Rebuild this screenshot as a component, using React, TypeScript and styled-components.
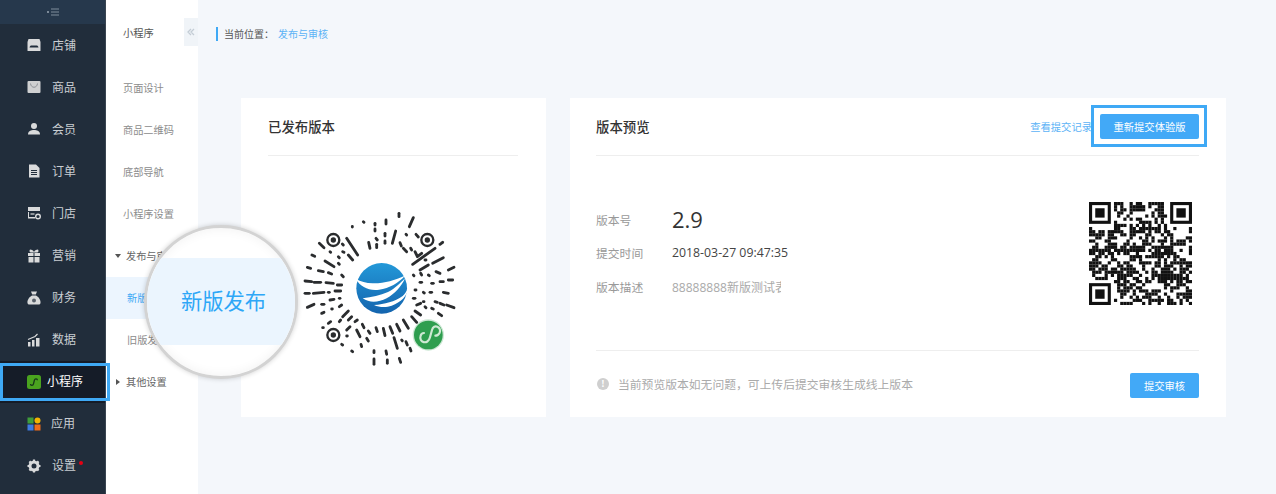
import React from "react";
import styled, { createGlobalStyle } from "styled-components";

const Global = createGlobalStyle`
  html, body { margin: 0; padding: 0; background: #f4f7fb; }
  body { font-family: "Noto Sans CJK SC", "Open Sans", sans-serif; }
  * { box-sizing: border-box; }
`;

const Page = styled.div`
  position: relative;
  display: flex;
  width: 1276px;
  height: 494px;
  overflow: hidden;
  background: #f4f7fb;
`;

const Sidebar = styled.nav`
  width: 106px;
  flex: none;
  background: #212d3b;
  border-right: 1px solid #3a4551;
`;

const TopBar = styled.div`
  height: 24px;
  background: #26384c;
  display: flex;
  align-items: center;
  justify-content: center;
`;

const NavItem = styled.div<{ $active?: boolean }>`
  position: relative;
  height: 42.1px;
  display: flex;
  align-items: center;
  padding-left: 27px;
  font-size: 12px;
  color: ${(p) => (p.$active ? "#ffffff" : "#c9cdd2")};
  background: ${(p) => (p.$active ? "#151c28" : "transparent")};
  ${(p) =>
    p.$active &&
    `&::after {
      content: "";
      position: absolute;
      left: 0;
      right: -5px;
      top: 2px;
      bottom: 2px;
      border: 3px solid #3fa9f5;
      z-index: 3;
    }`}
`;

const NavLabel = styled.span<{ $gap: number }>`
  margin: -2px 0 0 ${(p) => p.$gap}px;
  white-space: nowrap;
`;

const RedDot = styled.i`
  position: absolute;
  left: 79px;
  top: 16px;
  width: 4px;
  height: 4px;
  border-radius: 50%;
  background: #e60012;
`;

const SubMenu = styled.aside`
  position: relative;
  width: 92px;
  flex: none;
  background: #fff;
`;

const SubHeader = styled.div`
  height: 67px;
  padding: 24px 0 0 17px;
  font-size: 10.3px;
  line-height: 18px;
  color: #555;
`;

const CollapseTab = styled.div`
  position: absolute;
  right: 0;
  top: 18px;
  width: 14px;
  height: 28px;
  background: #f0f4f8;
  color: #c3ccd5;
  display: flex;
  align-items: center;
  justify-content: center;
`;

const SubItem = styled.div<{ $active?: boolean; $group?: boolean; $muted?: boolean }>`
  height: 42px;
  display: flex;
  align-items: center;
  padding-bottom: 1px;
  padding-left: ${(p) => (p.$group ? "9px" : p.$active || p.$muted ? "21px" : "17px")};
  font-size: 10.2px;
  white-space: nowrap;
  overflow: hidden;
  color: ${(p) => (p.$active ? "#3fa9f5" : p.$group ? "#666" : "#8c8c8c")};
  background: ${(p) => (p.$active ? "#ecf5fe" : "transparent")};
`;

const Caret = styled.span<{ $open?: boolean }>`
  width: 0;
  height: 0;
  margin-right: 5px;
  ${(p) =>
    p.$open
      ? `border-left: 3px solid transparent; border-right: 3px solid transparent; border-top: 4px solid #555;`
      : `border-top: 3px solid transparent; border-bottom: 3px solid transparent; border-left: 4px solid #555; margin-left: 1px; margin-right: 6px;`}
`;

const Main = styled.main`
  flex: 1;
  padding: 27px 0 0 18px;
`;

const Crumb = styled.div`
  height: 14px;
  border-left: 2px solid #3fa9f5;
  padding-left: 6px;
  font-size: 10px;
  line-height: 14px;
  color: #555;
  display: flex;
`;

const CrumbLink = styled.span`
  margin-left: 4px;
  color: #5cb3f6;
`;

const Cards = styled.div`
  display: flex;
  gap: 24px;
  margin: 57px 0 0 25px;
`;

const Card = styled.section<{ $w: number }>`
  width: ${(p) => p.$w}px;
  height: 319px;
  background: #fff;
  padding: 0 ${(p) => (p.$w > 400 ? 27 : 28)}px 0 ${(p) => (p.$w > 400 ? 26 : 27)}px;
`;

const CardHead = styled.header`
  height: 58px;
  padding-bottom: 1px;
  border-bottom: 1px solid #eeeeee;
  display: flex;
  align-items: center;
  justify-content: space-between;
`;

const CardTitle = styled.h2`
  margin: 0;
  font-size: 13.4px;
  font-weight: 500;
  color: #333;
`;

const HeadActions = styled.div`
  display: flex;
  align-items: center;
  gap: 8px;
`;

const TextLink = styled.span`
  font-size: 10.3px;
  color: #5cb3f6;
  margin-left: -1px;
`;

const Button = styled.button<{ $marked?: boolean }>`
  position: relative;
  height: 25px;
  border: 0;
  border-radius: 2px;
  background: #42a9f7;
  color: #fff;
  font: inherit;
  font-size: 10.3px;
  padding: 0;
  width: ${(p) => (p.$marked ? 99 : 69)}px;
  ${(p) =>
    p.$marked &&
    `&::after {
      content: "";
      position: absolute;
      left: -9px;
      right: -8px;
      top: -9px;
      bottom: -8px;
      border: 3px solid #3fa9f5;
    }`}
`;

const CodeWrap = styled.div`
  margin: 49px 0 0 32px;
  width: 165px;
  height: 165px;
`;

const PreviewBody = styled.div`
  height: 195px;
  border-bottom: 1px solid #eeeeee;
  display: flex;
  justify-content: space-between;
  padding: 46px 7px 0 0;
`;

const InfoList = styled.div`
  display: grid;
  grid-template-columns: 76px 1fr;
  grid-template-rows: 34px 33px 35px;
  align-items: center;
  height: 102px;
`;

const InfoLabel = styled.span`
  font-size: 11.8px;
  color: #999;
`;

const Version = styled.span`
  font-family: "Open Sans", sans-serif;
  font-size: 22px;
  color: #333;
`;

const DateText = styled.span`
  font-family: "Open Sans", sans-serif;
  font-size: 12.3px;
  color: #444;
`;

const Desc = styled.span`
  display: block;
  width: 109px;
  overflow: hidden;
  white-space: nowrap;
  font-family: "Open Sans", "Noto Sans CJK SC", sans-serif;
  font-size: 12px;
  color: #aaa;
`;

const QrBox = styled.div`
  width: 103px;
  height: 103px;
`;

const PreviewFoot = styled.footer`
  height: 65px;
  padding: 3px 0 0 0;
  display: flex;
  align-items: center;
  justify-content: space-between;
`;

const Tip = styled.div`
  display: flex;
  align-items: center;
  margin-top: -3px;
  padding-left: 1px;
  font-size: 11.8px;
  color: #aaa;
`;

const TipIcon = styled.i`
  width: 12px;
  height: 12px;
  margin-right: 9px;
  border-radius: 50%;
  background: #cfcfcf;
  color: #fff;
  font-size: 9px;
  line-height: 12px;
  font-style: normal;
  font-weight: 700;
  text-align: center;
`;

const Lens = styled.div`
  position: absolute;
  left: 144px;
  top: 225px;
  width: 154px;
  height: 154px;
  border-radius: 50%;
  border: 3px solid #d3d3d3;
  background: #fff;
  overflow: hidden;
  display: flex;
  align-items: center;
  box-shadow: 0 0 5px rgba(0, 0, 0, 0.18), inset 0 0 12px rgba(0, 0, 0, 0.06);
  z-index: 2;
`;

const LensBand = styled.div`
  width: 100%;
  height: 87px;
  margin-top: -2px;
  background: #ebf5fe;
  color: #2ea7f7;
  font-size: 21.3px;
  display: flex;
  align-items: center;
  justify-content: center;
  padding: 0 0 4px 5px;
`;

const c = "#d9dadb";
const Ico = ({ children }: { children: React.ReactNode }) => (
  <svg width="14" height="14" viewBox="0 0 14 14" style={{ flex: "none" }}>
    {children}
  </svg>
);

const icons: Record<string, React.ReactNode> = {
  store: (
    <Ico>
      <path d="M1.500 1h11l1 3v8.500a.5.5 0 0 1-.5.5H1a.5.5 0 0 1-.5-.5V4z" fill={c} />
      <path d="M2.500 9.500c.5-1.500 1-2 2-2h5c1 0 1.500.5 2 2z" fill="#212d3b" />
    </Ico>
  ),
  bag: (
    <Ico>
      <rect x="0.500" y="1" width="13" height="12" rx="1" fill="#cfd0d1" />
      <path d="M3.500 3.500c.5 5 6.500 5 7 0" fill="none" stroke="#8d9197" strokeWidth="1" />
    </Ico>
  ),
  user: (
    <Ico>
      <circle cx="7" cy="4" r="3" fill={c} />
      <path d="M1 12.500c0-3.500 3-4.500 6-4.500s6 1 6 4.500z" fill={c} />
    </Ico>
  ),
  file: (
    <Ico>
      <path d="M2 .5h7l3.500 3.500v9.500H2z" fill={c} />
      <path d="M4 6.500h6M4 8.500h6M4 10.500h6" stroke="#212d3b" strokeWidth="1" />
    </Ico>
  ),
  shop: (
    <Ico>
      <path d="M1 1h12v4H1z" fill={c} />
      <path d="M1 6h1v5h6v1.500H1z" fill={c} />
      <circle cx="11" cy="10.500" r="2.300" fill="none" stroke={c} strokeWidth="1.400" />
      <path d="M3.500 8h4" stroke={c} strokeWidth="1.200" />
    </Ico>
  ),
  gift: (
    <Ico>
      <path d="M3 .5c2 0 3.500 1 4 2.500.5-1.500 2-2.500 4-2.500 1 1 .5 3-1 3H4c-1.500 0-2-2-1-3z" fill={c} />
      <path d="M1 4h5.500v3H1zM7.500 4H13v3H7.500zM1.500 8h5v5.500h-5zM7.500 8h5v5.500h-5z" fill={c} />
    </Ico>
  ),
  money: (
    <Ico>
      <path d="M4 .5h6L8.800 3.500H5.200z" fill={c} />
      <path d="M5 4.500h4c3 1.500 5 5 4.500 7.500-.2 1-1 1.500-2 1.500h-9c-1 0-1.800-.5-2-1.500C0 9.500 2 6 5 4.500z" fill={c} />
      <circle cx="7" cy="9.500" r="2" fill="#59616b" />
    </Ico>
  ),
  chart: (
    <Ico>
      <path d="M1 9h2.500v4.500H1zM5 7h2.500v6.500H5zM9 5h3.500v8.500H9z" fill={c} />
      <path d="M1 6.500 8 3.500l2.500-2.500" fill="none" stroke={c} strokeWidth="1.200" />
    </Ico>
  ),
  mini: (
    <Ico>
      <rect width="14" height="14" rx="2.500" fill="#4aa31f" />
      <path d="M3.500 9c0 1.600 2.500 2 3-.2l.9-3.600c.5-2 3-1.600 3 .1" fill="none" stroke="#17361a" strokeWidth="1.300" />
    </Ico>
  ),
  apps: (
    <Ico>
      <rect x="0.500" y="0.500" width="6" height="6" fill="#3f9d3b" />
      <circle cx="10.500" cy="3.500" r="3" fill="#f4b400" />
      <rect x="0.500" y="7.500" width="6" height="6" fill="#3f7be0" />
      <rect x="7.500" y="7.500" width="6" height="6" fill="#ef6c1a" />
    </Ico>
  ),
  gear: (
    <Ico>
      <circle cx="7" cy="7" r="4" fill="none" stroke={c} strokeWidth="3" />
      <path
        d="M7 .5v13M.5 7h13M2.400 2.400l9.200 9.200M11.600 2.400l-9.200 9.200"
        stroke={c}
        strokeWidth="2.200"
        strokeDasharray="2.600 7.800"
      />
    </Ico>
  ),
};

const nav = [
  ["store", "店铺", 11],
  ["bag", "商品", 11],
  ["user", "会员", 11],
  ["file", "订单", 11],
  ["shop", "门店", 11],
  ["gift", "营销", 11],
  ["money", "财务", 11],
  ["chart", "数据", 11],
  ["mini", "小程序", 6],
  ["apps", "应用", 10],
  ["gear", "设置", 11],
] as const;

const strokes: number[][] = [
  [297, 25, 297, 35], [340, 38, 328, 65], [258, 45, 258, 57], [225, 55, 225, 60], [190, 50, 192, 52], [157, 64, 157, 66],
  [225, 72, 225, 78], [255, 85, 255, 93], [287, 78, 277, 115], [255, 108, 255, 115], [228, 100, 232, 105], [206, 112, 210, 130],
  [230, 118, 230, 128], [300, 113, 304, 123], [318, 88, 320, 90], [348, 88, 355, 96], [140, 100, 173, 150], [127, 117, 130, 120],
  [58, 115, 72, 128], [36, 150, 44, 154], [90, 140, 92, 142], [115, 155, 118, 158], [128, 140, 132, 142], [145, 150, 158, 165],
  [75, 168, 102, 185], [22, 187, 32, 190], [115, 175, 118, 178], [55, 197, 70, 200], [85, 203, 95, 207], [125, 210, 130, 215],
  [15, 228, 35, 230], [42, 232, 62, 232], [78, 233, 100, 235], [112, 240, 125, 240], [15, 265, 28, 265], [40, 265, 72, 262],
  [85, 262, 88, 262], [105, 258, 122, 258], [22, 307, 42, 298], [65, 298, 72, 298], [90, 285, 102, 283], [118, 280, 120, 280],
  [65, 325, 72, 322], [118, 305, 125, 300], [95, 312, 97, 312], [128, 335, 145, 318], [118, 350, 122, 345], [145, 345, 155, 335],
  [165, 350, 172, 345], [85, 355, 92, 350], [68, 368, 70, 368], [150, 365, 140, 375], [187, 358, 192, 368], [170, 375, 180, 395],
  [140, 393, 142, 393], [205, 378, 210, 385], [200, 400, 205, 408], [228, 368, 232, 380], [250, 370, 255, 392], [270, 365, 278, 385],
  [290, 358, 300, 378], [310, 345, 325, 370], [335, 335, 350, 352], [345, 318, 362, 330], [125, 418, 128, 420], [155, 438, 158, 440],
  [183, 418, 185, 425], [222, 437, 222, 443], [222, 462, 222, 478], [258, 438, 260, 448], [262, 465, 262, 475], [282, 398, 292, 430],
  [298, 460, 302, 472], [318, 410, 322, 420], [330, 430, 333, 438], [305, 405, 307, 407], [420, 118, 428, 112], [332, 130, 335, 135],
  [310, 130, 320, 140], [345, 140, 350, 150], [338, 178, 405, 130], [360, 195, 385, 180], [398, 175, 430, 158], [375, 165, 378, 165],
  [352, 155, 365, 145], [445, 195, 462, 187], [408, 200, 420, 205], [385, 210, 388, 212], [362, 205, 365, 210], [340, 210, 342, 212],
  [360, 232, 365, 232], [395, 235, 400, 235], [420, 230, 430, 230], [445, 225, 458, 225], [345, 255, 348, 255], [370, 262, 373, 264],
  [390, 262, 395, 262], [430, 262, 445, 265], [405, 290, 412, 292], [420, 295, 432, 300], [440, 300, 462, 308], [370, 290, 372, 290],
  [350, 300, 362, 295], [395, 310, 400, 312], [415, 325, 425, 332], [375, 305, 378, 308], [340, 280, 345, 280],
];

const finders: [number, number][] = [
  [100, 105],
  [382, 105],
  [100, 390],
];

const MiniCode = () => (
  <svg width="165" height="165" viewBox="0 0 495 495">
    <defs>
      <linearGradient id="ball" x1="0" y1="0" x2="0" y2="1">
        <stop offset="0" stopColor="#2398d8" />
        <stop offset="1" stopColor="#1464ae" />
      </linearGradient>
    </defs>
    {strokes.map(([x1, y1, x2, y2], i) => (
      <line key={i} x1={x1} y1={y1} x2={x2} y2={y2} stroke="#2a2c2e" strokeWidth="8.500" strokeLinecap="round" />
    ))}
    {finders.map(([x, y]) => (
      <g key={x + "-" + y}>
        <circle cx={x} cy={y} r="18" fill="none" stroke="#2a2c2e" strokeWidth="7" />
        <circle cx={x} cy={y} r="8" fill="#2a2c2e" />
      </g>
    ))}
    <circle cx="245" cy="250" r="76" fill="url(#ball)" />
    <path d="M168 222c14 8 30 12 50 13 34 1 66-10 97-23-20 22-46 37-78 42-30 4-56-8-69-32z" fill="#fff" />
    <path d="M188 280c28-4 52-9 76-19 20-9 36-26 51-41-10 24-30 46-55 60-25 12-50 15-72 0z" fill="#fff" />
    <path d="M222 300c32-2 62-10 86-27 6-5 12-15 17-23-4 24-22 42-50 52-16 6-36 6-53-2z" fill="#fff" />
    <circle cx="385" cy="390" r="47" fill="#2f9e4f" opacity="0.25" />
    <circle cx="385" cy="390" r="43" fill="#2f9e4f" />
    <path
      d="M362 392c-7 20 22 30 28 5l6-22c5-20 30-9 23 8-3 6-8 9-13 9M372 384c-5 0-9 3-10 8"
      fill="none"
      stroke="#cfe9d4"
      strokeWidth="6.500"
      strokeLinecap="round"
    />
  </svg>
);

function rng(seed: number) {
  let s = seed;
  return () => {
    s = (s * 16807) % 2147483647;
    return s / 2147483647;
  };
}

const N = 33;
const qrCells = (() => {
  const r = rng(9157);
  const cells: [number, number][] = [];
  const on = new Set<string>();
  for (let y = 0; y < N; y++) {
    for (let x = 0; x < N; x++) {
      const reserved = (x < 8 && y < 8) || (x >= N - 8 && y < 8) || (x < 8 && y >= N - 8);
      const linked = on.has(x - 1 + "," + y) || on.has(x + "," + (y - 1));
      if (!reserved && r() < (linked ? 0.58 : 0.42)) {
        cells.push([x, y]);
        on.add(x + "," + y);
      }
    }
  }
  return cells;
})();

const QrFinder = ({ x, y }: { x: number; y: number }) => (
  <g>
    <rect x={x + 0.5} y={y + 0.5} width="6" height="6" fill="none" stroke="#111" strokeWidth="1" />
    <rect x={x + 2} y={y + 2} width="3" height="3" fill="#111" />
  </g>
);

const Qr = () => (
  <svg width="103" height="103" viewBox={`0 0 ${N} ${N}`}>
    {qrCells.map(([x, y]) => (
      <rect key={x + "," + y} x={x} y={y} width="1.020" height="1.020" fill="#111" />
    ))}
    <QrFinder x={0} y={0} />
    <QrFinder x={N - 7} y={0} />
    <QrFinder x={0} y={N - 7} />
  </svg>
);

export default function App() {
  return (
    <Page>
      <Global />
      <Sidebar>
        <TopBar>
          <svg width="12" height="8" viewBox="0 0 12 8">
            <circle cx="1" cy="4" r="1" fill="#9aa6b2" />
            <path d="M4 1h8M4 4h8M4 7h8" stroke="#7f8d9b" strokeWidth="1" />
          </svg>
        </TopBar>
        {nav.map(([icon, label, gap]) => (
          <NavItem key={label} $active={icon === "mini"}>
            {icons[icon]}
            <NavLabel $gap={gap}>{label}</NavLabel>
            {icon === "gear" && <RedDot />}
          </NavItem>
        ))}
      </Sidebar>
      <SubMenu>
        <SubHeader>小程序</SubHeader>
        <CollapseTab>
          <svg width="8" height="8" viewBox="0 0 8 8">
            <path d="M4 1 1 4l3 3M7 1 4 4l3 3" fill="none" stroke="currentColor" strokeWidth="1.300" />
          </svg>
        </CollapseTab>
        <SubItem>页面设计</SubItem>
        <SubItem>商品二维码</SubItem>
        <SubItem>底部导航</SubItem>
        <SubItem>小程序设置</SubItem>
        <SubItem $group>
          <Caret $open />
          发布与审核
        </SubItem>
        <SubItem $active>新版发布</SubItem>
        <SubItem $muted>旧版发布</SubItem>
        <SubItem $group>
          <Caret />
          其他设置
        </SubItem>
      </SubMenu>
      <Main>
        <Crumb>
          当前位置：
          <CrumbLink>发布与审核</CrumbLink>
        </Crumb>
        <Cards>
          <Card $w={305}>
            <CardHead>
              <CardTitle>已发布版本</CardTitle>
            </CardHead>
            <CodeWrap>
              <MiniCode />
            </CodeWrap>
          </Card>
          <Card $w={656}>
            <CardHead>
              <CardTitle>版本预览</CardTitle>
              <HeadActions>
                <TextLink>查看提交记录</TextLink>
                <Button $marked>重新提交体验版</Button>
              </HeadActions>
            </CardHead>
            <PreviewBody>
              <InfoList>
                <InfoLabel>版本号</InfoLabel>
                <Version>2.9</Version>
                <InfoLabel>提交时间</InfoLabel>
                <DateText>2018-03-27 09:47:35</DateText>
                <InfoLabel>版本描述</InfoLabel>
                <Desc>88888888新版测试表单</Desc>
              </InfoList>
              <QrBox>
                <Qr />
              </QrBox>
            </PreviewBody>
            <PreviewFoot>
              <Tip>
                <TipIcon>!</TipIcon>
                当前预览版本如无问题，可上传后提交审核生成线上版本
              </Tip>
              <Button>提交审核</Button>
            </PreviewFoot>
          </Card>
        </Cards>
      </Main>
      <Lens>
        <LensBand>新版发布</LensBand>
      </Lens>
    </Page>
  );
}
